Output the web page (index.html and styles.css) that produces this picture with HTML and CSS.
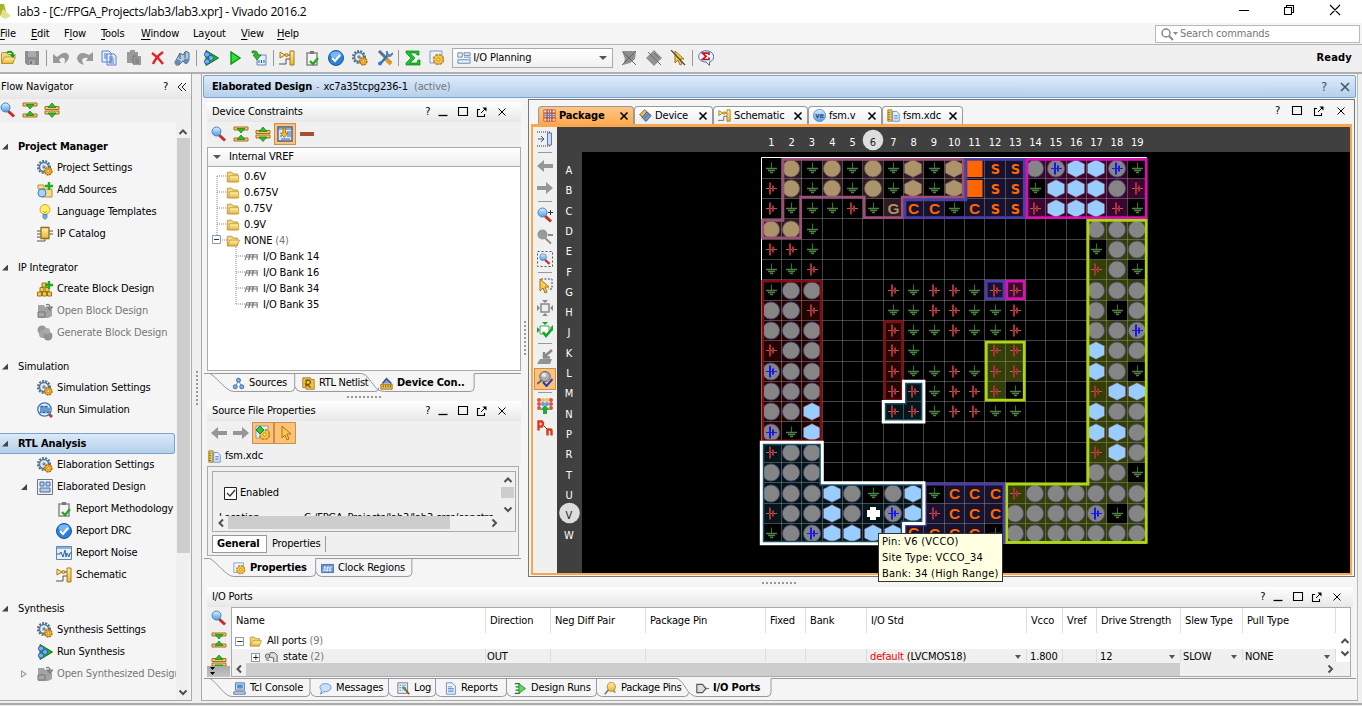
FILE: index.html
```
<!DOCTYPE html>
<html lang="en">
<head>
<meta charset="utf-8">
<title>lab3 - Vivado 2016.2</title>
<link rel="stylesheet" href="styles.css">
</head>
<body>
<svg class="defs">
<defs>
<linearGradient id="gold" x2="0" y2="1"><stop offset="0" stop-color="#fff3a8"/><stop offset="1" stop-color="#e9b53a"/></linearGradient>
<linearGradient id="sky" x2="0" y2="1"><stop offset="0" stop-color="#d9f0ff"/><stop offset="1" stop-color="#4f9be6"/></linearGradient>
</defs>
<symbol id="folder" viewBox="0 0 16 16"><path d="M1.500 3.500q0-1 1-1h4l1.500 2h5v9h-11.500z" fill="#f4d681" stroke="#b8902f"/><path d="M4 6.500h10.500v7H3z" fill="url(#gold)" stroke="#c29a37" stroke-width=".9"/></symbol>
<symbol id="fopen" viewBox="0 0 16 16"><path d="M1.500 3.500q0-1 1-1h4l1.500 2h5v9h-11.500z" fill="#f4d681" stroke="#b8902f"/><path d="M4.500 7H15.500l-3 6.500H1.500z" fill="url(#gold)" stroke="#b8902f" stroke-width=".9"/></symbol>
<symbol id="open" viewBox="0 0 16 16"><use href="#fopen"/><path d="M7 2.500q5-2 6 2" fill="none" stroke="#189a18" stroke-width="2"/><path d="M9.500 4.500h6.500l-3 3.500z" fill="#189a18"/></symbol>
<symbol id="save" viewBox="0 0 16 16"><path d="M1 1h14v14H3l-2-2z" fill="#8d8d8d"/><path d="M4 1h8v6H4zM5 10h6v5H5z" fill="#aaa"/><path d="M6 11h2v3H6z" fill="#777"/></symbol>
<symbol id="undo" viewBox="0 0 16 16"><path d="M0 4v9h8L6 10q2-3 5-2 2 2 0 6 5-4 5-8Q13-1 4 7z" fill="#999"/></symbol>
<symbol id="redo" viewBox="0 0 16 16"><path d="M16 2v9H9l2-3Q6 7 5 10q0 2 2 5Q0 13 0 8 2 1 10 4l2 1z" fill="#999"/></symbol>
<symbol id="copy" viewBox="0 0 16 16"><path d="M1 1h7l2 2v9H1zM6 4h7l2 2v9H6z" fill="#e5efff" stroke="#5b83c9"/><path d="M3 4h3M3 6h3M3 8h3M8 7h4M8 9h5M8 11h5M8 13h5" stroke="#4c78c4"/></symbol>
<symbol id="paste" viewBox="0 0 16 16"><path d="M1 2h3V0h5v2h3v4h3v9H7v-2H1z" fill="#999"/><path d="M9 9h4M9 11h4M9 13h4M7 14V6h4" stroke="#777" fill="none"/></symbol>
<symbol id="del" viewBox="0 0 16 16"><path d="M2 3q6 4 11 11M13 2Q6 7 3 14" stroke="#e0241f" stroke-width="2.4" fill="none"/></symbol>
<symbol id="bino" viewBox="0 0 16 16"><path d="M1 12 6 3l3 2 3-4 3 2v7l-3 4-3-3-4 4q-4 1-4-3z" fill="#b7c9dc" stroke="#47698b"/><circle cx="4" cy="12" r="2.6" fill="#618cb4"/><circle cx="12" cy="11" r="2.6" fill="#618cb4"/><path d="M6 4v5M11 2v6" stroke="#36587e"/></symbol>
<symbol id="synth" viewBox="0 0 16 16"><path d="M3 0.500 15.500 8 3 15.500z" fill="#28ad20" stroke="#08750e"/><g fill="#77aef0" stroke="#2460a8"><circle cx="4" cy="4.500" r="2.600"/><circle cx="8" cy="8" r="2.600"/><circle cx="4" cy="11.500" r="2.600"/></g></symbol>
<symbol id="run" viewBox="0 0 16 16"><path d="M4 2v12l9-6z" fill="#2fe038" stroke="#07940d" stroke-width="1.4"/></symbol>
<symbol id="bit" viewBox="0 0 16 16"><path d="M6 5h9v10H6z" fill="#e7f1ff" stroke="#6686b0"/><path d="M8 10v3M10.500 10v3M13 10v3" stroke="#2558ae"/><path d="M1 1q6-1 6 4h3L6 10 2 5h2Q4 2 1 3z" fill="#38b530" stroke="#14791a" stroke-width=".7"/></symbol>
<symbol id="schem" viewBox="0 0 16 16"><path d="M1 2v6l5-3zM11 1h4v14h-4z" fill="url(#gold)" stroke="#a87916"/><path d="M6 5h5M0 14h7V9h4" fill="none" stroke="#555"/><circle cx="7.500" cy="5" r="1.500" fill="#ffd466" stroke="#a87916"/></symbol>
<symbol id="meth" viewBox="0 0 16 16"><path d="M3 3h10v12H3z" fill="#f4f4f4" stroke="#888" stroke-width="1.500"/><path d="M6 1h4v3H6z" fill="#777"/><path d="M6 11l3 3 5-6" fill="none" stroke="#28a52a" stroke-width="2.4"/></symbol>
<symbol id="drc" viewBox="0 0 16 16"><circle cx="8" cy="8" r="7.500" fill="#2e7fd6" stroke="#1858a6"/><ellipse cx="8" cy="5" rx="5.500" ry="3.500" fill="#79b7f2"/><path d="M4 8l3 3 5-6" stroke="#fff" stroke-width="2" fill="none"/></symbol>
<symbol id="gear" viewBox="0 0 16 16"><circle cx="7" cy="7" r="6" fill="none" stroke="#52708c" stroke-width="2" stroke-dasharray="2 1.200"/><circle cx="7" cy="7" r="4.500" fill="#e5edf5" stroke="#56748f" stroke-width="1.500"/><circle cx="7" cy="7" r="1.700" fill="#6f8aa2"/><circle cx="11.300" cy="11.300" r="3.600" fill="#f4b52c" stroke="#b46d08" stroke-width="1.500" stroke-dasharray="2 .7"/><circle cx="11.300" cy="11.300" r="1.300" fill="#fff4c0" stroke="#a66206" stroke-width=".6"/></symbol>
<symbol id="tools" viewBox="0 0 16 16"><path d="M2 1l12 12" stroke="#58718d" stroke-width="3"/><path d="M9 9l5 5" stroke="#e29a24" stroke-width="4"/><path d="M3 14l9-10" stroke="#3471bd" stroke-width="2.500"/><path d="M10 1v4l3 1 3-3" fill="none" stroke="#5582b9" stroke-width="2"/><circle cx="3" cy="13.500" r="2" fill="#3c79c5"/></symbol>
<symbol id="sigma" viewBox="0 0 16 16"><path d="M1 1h13v4h-2l-1-2H5l5 5-5 5h7l1-3h2v5H1v-2l5-5-5-5z" fill="#19c52a" stroke="#078012" stroke-width=".7"/></symbol>
<symbol id="geardoc" viewBox="0 0 16 16"><path d="M1 1h12v12H1z" fill="#eaf2ff" stroke="#7b98c3"/><circle cx="9.500" cy="9.500" r="4.500" fill="#f3bd3a" stroke="#c8891a" stroke-width="2.500" stroke-dasharray="2.600 .9"/><circle cx="9.500" cy="9.500" r="4" fill="#f6c545"/><circle cx="9.500" cy="9.500" r="1.500" fill="#fff1b3" stroke="#a56b08" stroke-width=".7"/></symbol>
<symbol id="layout" viewBox="0 0 16 16"><path d="M1 2h5v5H1zM8 2h7v3H8zM8 7h7v2M1 10h14v4H1z" fill="#e6f0fb" stroke="#5e81a9"/></symbol>
<symbol id="grayleaf" viewBox="0 0 16 16"><path d="M1 1h14l-1 8-5 4-7 2 2-6z" fill="#8f8f8f"/><path d="M2 2l13 13M1 15 15 1" stroke="#666"/></symbol>
<symbol id="graydia" viewBox="0 0 16 16"><path d="M8 0l8 8-8 8-8-8z" fill="#929292"/><path d="M2 2l13 13M5 5l4 4M8 3l5 5" stroke="#6b6b6b"/></symbol>
<symbol id="cursor" viewBox="0 0 16 16"><path d="M5 1v12l3-3 2 5 2-1-2-5h4z" fill="#f8c94a" stroke="#a6721a"/></symbol>
<symbol id="nocur" viewBox="0 0 16 16"><use href="#cursor"/><path d="M1 0l14 15" stroke="#454545" stroke-width="1.200"/></symbol>
<symbol id="say" viewBox="0 0 16 16"><path d="M8 .8c10 0 9 10.500 3.500 11v3.700L8 12C-2 12-1.500.8 8 .8z" fill="#eef4ff" stroke="#426cb2"/><path d="M11 5V3.200H4.500L8 6.300 4.500 9.500H11V7.500" fill="none" stroke="#c4141c" stroke-width="1.700"/></symbol>
<symbol id="mag" viewBox="0 0 16 16"><path d="M8 9l6 5.500" stroke="#c92b22" stroke-width="3"/><circle cx="5.500" cy="5.500" r="4.500" fill="url(#sky)" stroke="#4b83b5"/></symbol>
<symbol id="grymag" viewBox="0 0 16 16"><path d="M8 9l6 5.500M11 6h5" stroke="#8d8d8d" stroke-width="2"/><circle cx="5.500" cy="5.500" r="5" fill="#999"/></symbol>
<symbol id="zin" viewBox="0 0 16 16"><use href="#mag"/><path d="M11 5.500h5M13.500 3v5" stroke="#333"/></symbol>
<symbol id="zfit" viewBox="0 0 16 16"><path d="M.5.5h15v15H.5z" fill="none" stroke="#555" stroke-dasharray="2 2"/><g transform="translate(2 2) scale(.75)"><use href="#mag" width="16" height="16"/></g></symbol>
<symbol id="collapse" viewBox="0 0 16 16"><path d="M1 1h14v3H1zM1 12h14v3H1z" fill="#f2ca74" stroke="#a6701b"/><path d="M4 2.500h8L8 7zM4 13.500h8L8 9z" fill="#35b827" stroke="#187b13" stroke-width=".7"/></symbol>
<symbol id="expand" viewBox="0 0 16 16"><path d="M1 4.500h14v3H1zM1 9h14v3H1z" fill="#f2ca74" stroke="#a6701b"/><path d="M4 5.500h8L8 1zM4 11h8l-4 4.500z" fill="#35b827" stroke="#187b13" stroke-width=".7"/></symbol>
<symbol id="addsrc" viewBox="0 0 16 16"><path d="M1 3h6v4H1zM5 7h10v8H5z" fill="#f5dc8b" stroke="#b69236"/><circle cx="5" cy="11" r="4" fill="#a9d2fb" stroke="#427eb9"/><path d="M12 0v8M8 4h8" stroke="#1eac25" stroke-width="2.400"/></symbol>
<symbol id="bulb" viewBox="0 0 16 16"><circle cx="8" cy="5.500" r="5" fill="#ffec6b" stroke="#d3a72b"/><path d="M6 7l2 2 2-2" fill="none" stroke="#e0a020"/><path d="M6 10.500h4v3l-2 2-2-2z" fill="#66b5ed" stroke="#3474aa" stroke-width=".7"/></symbol>
<symbol id="ip" viewBox="0 0 16 16"><path d="M0 5h4M0 8h4M0 11h4M12 5h4M12 8h4M0 15h8v-3" stroke="#555" fill="none"/><path d="M4 1.500h8v11H4z" fill="url(#gold)" stroke="#8f721b" stroke-width="1.300"/></symbol>
<symbol id="block" viewBox="0 0 16 16"><path d="M5 2h5v4H5zM3 6.500h4v4H3zM8 6.500h4v4H8zM.5 11h4v4h-4zM5.500 11h4v4h-4zM10.500 11h4v4h-4z" fill="#f0cd50" stroke="#9b7615"/><path d="M12 0v8M8 4h8" stroke="#1eac25" stroke-width="2.400"/></symbol>
<symbol id="grayblk" viewBox="0 0 16 16"><path d="M1 2h6l1 2h4l3 3v6l-4 2H1z" fill="#a3a3a3"/><path d="M1 9h7v5H1z" fill="#a8a8a8" stroke="#777"/><path d="M9 2q4-2 4 3M10.500 4h5L13 7z" stroke="#777" fill="none" stroke-width="1.200"/></symbol>
<symbol id="graygen" viewBox="0 0 16 16"><circle cx="5" cy="5" r="4.500" fill="#999"/><circle cx="6" cy="9" r="4" fill="#a5a5a5"/><circle cx="11" cy="11" r="4.500" fill="#939393"/><circle cx="10" cy="6" r="3" fill="#aaa"/></symbol>
<symbol id="sim" viewBox="0 0 16 16"><path d="M11 11l4 4" stroke="#c5401c" stroke-width="3"/><circle cx="7.500" cy="7.500" r="6.700" fill="#edf6ff" stroke="#3876b5" stroke-width="1.300"/><path d="M2.500 10.500h1.500V4.500h2v6h2v-6h2v6h2v-5" fill="none" stroke="#2a65b5" stroke-width="1.300"/></symbol>
<symbol id="elab" viewBox="0 0 16 16"><path d="M.5.5h15v15H.5z" fill="#e9eff7" stroke="#777"/><path d="M3 3h4v4H3zM9 3h4v4H9zM3 9h10v4H3z" fill="#b2ccea" stroke="#4b73a9"/></symbol>
<symbol id="noise" viewBox="0 0 16 16"><path d="M.5 1.500h15v13H.5z" fill="#e4effa" stroke="#5a87b5"/><path d="M1 3h14" stroke="#8db4da" stroke-width="2"/><path d="M1 9h3l1-2 2 5 2-7 1 7 1-4 2 4 1-4h2" fill="none" stroke="#346398"/></symbol>
<symbol id="down" viewBox="0 0 16 16"><path d="M1 1h14v14H1z" fill="#dfecff" stroke="#416494" stroke-width="1.400"/><path d="M1 3h14M10 6h4M10 8h4M4 13h9M3 10h2M10 10h4" stroke="#35659c"/><path d="M6 2h2.500v5H11l-3.700 4.500L3.500 7H6z" fill="#f5be31" stroke="#9a670f" stroke-width=".8"/></symbol>
<symbol id="minus" viewBox="0 0 16 16"><path d="M1 6h14v4H1z" fill="#a8502b"/></symbol>
<symbol id="left" viewBox="0 0 16 16"><path d="M0 8l7-6v4h9v4H7v4z" fill="#969696"/></symbol>
<symbol id="right" viewBox="0 0 16 16"><path d="M16 8 9 2v4H0v4h9v4z" fill="#969696"/></symbol>
<symbol id="prop" viewBox="0 0 16 16"><use href="#geardoc"/><path d="M5 1l4 4-4 4-4-4z" fill="#38c13b" stroke="#12812a"/></symbol>
<symbol id="xdc" viewBox="0 0 16 16"><path d="M1 1h5v14H1z" fill="#f1cf57" stroke="#987418"/><path d="M1 4h3M1 7h3M1 10h3M1 13h3" stroke="#765b17"/><path d="M7 3h5l3 3v9H7z" fill="#e7f0ff" stroke="#4e7fc3"/><path d="M9 8h4M9 10h4M9 12h4" stroke="#4e7fc3"/></symbol>
<symbol id="bank" viewBox="0 0 16 16"><path d="M.5 11.500l2-6h3v5M4.500 11.500l2-6h3v5M8.500 11.500l2-6h4v6M1 8h13" fill="none" stroke="#777" stroke-width="1.200"/></symbol>
<symbol id="src" viewBox="0 0 16 16"><path d="M8 4 4 12M8 4l4 8" stroke="#7489a8"/><g fill="#7bb0e8" stroke="#335b94"><circle cx="8" cy="4" r="2.500"/><circle cx="4" cy="12" r="2.500"/><circle cx="12" cy="12" r="2.500"/></g></symbol>
<symbol id="rtl" viewBox="0 0 16 16"><path d="M1 1h9l1 2h4v12H5v-2H1z" fill="#f0c448" stroke="#986f12"/><path d="M5 12V4h4q3 2.500 0 5H5l6 4" fill="none" stroke="#7b5a10" stroke-width="1.600"/></symbol>
<symbol id="chip" viewBox="0 0 16 16"><path d="M1 7l6-6 8 7-6 7z" fill="#7795c8" stroke="#334e7d"/><path d="M1 7l6-6 3 2.500-6 6z" fill="#e4c05a" stroke="#7b671f" stroke-width=".7"/><path d="M5 9l5-5.500M7 11l5.500-5.500M3 11l6 5" stroke="#24395f" stroke-dasharray="1 1"/></symbol>
<symbol id="devcon" viewBox="0 0 16 16"><path d="M3 8l5-6 6 6" fill="#839ecb" stroke="#40577f" stroke-width="2"/><path d="M1 9h14v6H1z" fill="#eac34b" stroke="#8b6817"/><path d="M4 10v3M7 10v3M10 10v3M13 10v3" stroke="#6d5011"/></symbol>
<symbol id="clock" viewBox="0 0 16 16"><path d="M.5 3h15v10H.5z" fill="#6894d5" stroke="#3866aa"/><path d="M2 11h2V6h2v5h2V6h2v5h2V6h2" fill="none" stroke="#fff"/></symbol>
<symbol id="pkg" viewBox="0 0 16 16"><path d="M1 1h14v14H1z" fill="#fff0b8" stroke="#b64a32"/><path d="M1 5h14M1 11h14M5 1v14M11 1v14" stroke="#c9372b" stroke-width="1.600"/><path d="M1 8h14M8 1v14" stroke="#5c86ca" stroke-width="1.600"/></symbol>
<symbol id="ve" viewBox="0 0 16 16"><circle cx="8" cy="8" r="7.500" fill="url(#sky)" stroke="#4e86b9"/><text x="8" y="11.200" font-size="9" font-weight="bold" text-anchor="middle" fill="#1d4b83">ve</text></symbol>
<symbol id="dock" viewBox="0 0 16 16"><path d="M10.500 2h4v12h-4z" fill="#c9dcf5" stroke="#5b7bab"/><path d="M0 1h14M0 15h14" stroke="#333" stroke-dasharray="1 1"/><path d="M1 8h6M4 5l3 3-3 3" stroke="#37588b" fill="none"/></symbol>
<symbol id="selarea" viewBox="0 0 16 16"><path d="M4 1h11v10h-4" fill="none" stroke="#444" stroke-dasharray="2 1.500"/><use href="#cursor" x="-2"/></symbol>
<symbol id="resize" viewBox="0 0 16 16"><path d="M4 4h8v8H4z" fill="#eee" stroke="#888" stroke-width="1.500"/><path d="M5 0h6L8 3zM5 16h6l-3-3zM0 5v6l3-3zM16 5v6l-3-3z" fill="#888"/></symbol>
<symbol id="greenfit" viewBox="0 0 16 16"><path d="M3 4h9v8H3z" fill="#fff" stroke="#49a94e"/><path d="M5 0h6L8 3zM0 5v6l3-3zM16 3v6l-3-3z" fill="#19a52b"/><path d="M6 10l3 4 6-7" stroke="#19a52b" stroke-width="2.500" fill="none"/></symbol>
<symbol id="graychip" viewBox="0 0 16 16"><path d="M0 15l3-5h12l-2 5z" fill="#929292"/><path d="M15 1 7 8M7 3v5.500h6" stroke="#888" stroke-width="2.500" fill="none"/></symbol>
<symbol id="ball" viewBox="0 0 16 16"><path d="M6 11l3.500 4L15.500 8" stroke="#213cb8" stroke-width="2" fill="none"/><path d="M0 13l5-4" stroke="#666" stroke-width="2"/><ellipse cx="8" cy="5.500" rx="5.300" ry="5" fill="#a9adb5" stroke="#626773"/><ellipse cx="7" cy="4" rx="2.500" ry="2" fill="#e5e8ec"/></symbol>
<symbol id="matrix" viewBox="0 0 16 16"><g fill="#df5140"><circle cx="2" cy="2" r="2"/><circle cx="14" cy="2" r="2"/><circle cx="2" cy="6" r="2"/><circle cx="14" cy="6" r="2"/><circle cx="2" cy="10" r="2"/><circle cx="14" cy="10" r="2"/></g><g fill="#edc058"><circle cx="6" cy="2" r="2"/><circle cx="10" cy="2" r="2"/></g><g fill="#6097e0"><circle cx="6" cy="6" r="2"/><circle cx="10" cy="6" r="2"/></g><path d="M8 7l5 5h-3v4H6v-4H3z" fill="#27a938"/></symbol>
<symbol id="pn" viewBox="0 0 16 16"><path d="M1.500 10.500V1.500h3.500q2 2.500 0 5H1.500M10.500 15.500V9.500h3q1 0 1 2v4" stroke="#dc3818" stroke-width="2.400" fill="none"/><path d="M7 6l3 3" stroke="#444"/></symbol>
<symbol id="console" viewBox="0 0 16 16"><path d="M3 1h11v9H3zM1 12h14v3H1z" fill="#c7dcf3" stroke="#47658b"/><path d="M5 3h7v5H5z" fill="#4d91d8"/></symbol>
<symbol id="msg" viewBox="0 0 16 16"><path d="M8 2c9 0 9 9 0 10H6l-4 3 1-5C-1 6 2 2 8 2z" fill="#c7e0fb" stroke="#5686bd"/></symbol>
<symbol id="log" viewBox="0 0 16 16"><path d="M1 1h12v13H1z" fill="#e7eef7" stroke="#56708e"/><path d="M3 4h8M3 7h8M3 10h4" stroke="#53759c" stroke-dasharray="2 1"/><path d="M9 8l6 7" stroke="#a3372a" stroke-width="2"/><path d="M7 6l4 4" stroke="#3ea245" stroke-width="3"/></symbol>
<symbol id="doc" viewBox="0 0 16 16"><path d="M3 1h7l4 4v10H3z" fill="#f0f6ff" stroke="#4e7fc3"/><path d="M5 6h5M5 8h7M5 10h7M5 12h7" stroke="#4e7fc3"/></symbol>
<symbol id="druns" viewBox="0 0 16 16"><path d="M6 2v12l8-6z" fill="#5fdb58" stroke="#128219"/><path d="M1 2h6M2 6h4M2 10h4M1 14h6" stroke="#23762a" stroke-width="1.300"/></symbol>
<symbol id="pin" viewBox="0 0 16 16"><path d="M1 15l5-6" stroke="#777" stroke-width="2"/><ellipse cx="9" cy="6" rx="5" ry="5.500" fill="url(#gold)" stroke="#ad7820"/><path d="M11 10l3 3" stroke="#ba8b2b" stroke-width="2"/></symbol>
<symbol id="port" viewBox="0 0 16 16"><path d="M1 3h7l4 5-4 5H1z" fill="#ddd" stroke="#555" stroke-width="1.400"/><path d="M12 8h4M12 6v4" stroke="#555"/></symbol>
<symbol id="bus" viewBox="0 0 16 16"><path d="M7 3h5l3 3v8h-4V9L6 8z" fill="#ddd" stroke="#555"/><circle cx="4" cy="7" r="2.500" fill="#ccc" stroke="#555"/><path d="M2 11l4 1" stroke="#555"/></symbol>
<symbol id="float" viewBox="0 0 12 12"><path d="M4 3.500H1.500v7h7V8" fill="none" stroke="#000" stroke-width="1.100"/><path d="M5 7l4-4" stroke="#000"/><path d="M6.500 1.500h4v4z"/></symbol>
<symbol id="max" viewBox="0 0 12 12"><path d="M1.500 1.500h9v8h-9z" fill="none" stroke="#000" stroke-width="1.100"/></symbol>
<symbol id="min" viewBox="0 0 12 12"><path d="M1.500 9.500h9" stroke="#000" stroke-width="1.300"/></symbol>
<symbol id="x" viewBox="0 0 12 12"><path d="M2.500 2.500l7 7M9.500 2.500l-7 7" stroke="#000" stroke-width="1"/></symbol>
<symbol id="bx" viewBox="0 0 12 12"><path d="M2.500 2.500l7 7M9.500 2.500l-7 7" stroke="#000" stroke-width="1.600"/></symbol>
<symbol id="gx" viewBox="0 0 12 12"><path d="M2 2l8 8M10 2l-8 8" stroke="#456" stroke-width="1.600"/></symbol>
<symbol id="up" viewBox="0 0 12 12"><path d="M2.500 8 6 4.500 9.500 8" fill="none" stroke="#505050" stroke-width="2"/></symbol>
<symbol id="dn" viewBox="0 0 12 12"><path d="M2.500 4.500 6 8l3.500-3.500" fill="none" stroke="#505050" stroke-width="2"/></symbol>
<symbol id="lt" viewBox="0 0 12 12"><path d="M8 2.500 4.500 6 8 9.500" fill="none" stroke="#505050" stroke-width="2"/></symbol>
<symbol id="rt" viewBox="0 0 12 12"><path d="M4.500 2.500 8 6 4.500 9.500" fill="none" stroke="#505050" stroke-width="2"/></symbol>
</svg>

<header class="title"><svg class="logo" viewBox="0 0 12 16"><path d="M0 0h4l2 8-6 4z" fill="#a9b52d"/><path d="M3 5l8 7-6 3-5-3z" fill="#e3e28c"/></svg><span>lab3 - [C:/FPGA_Projects/lab3/lab3.xpr] - Vivado 2016.2</span>
<svg class="winbtns" viewBox="0 0 120 20"><path d="M2 10.500h10M47.500 7.500h7v7h-7zM49.500 7.500v-2h7v7h-2M93 5l10 10M103 5 93 15" fill="none" stroke="#000" stroke-width="1.100"/></svg></header>
<nav class="menu"><span><u>F</u>ile</span><span><u>E</u>dit</span><span>F<u>l</u>ow</span><span><u>T</u>ools</span><span><u>W</u>indow</span><span>La<u>y</u>out</span><span><u>V</u>iew</span><span><u>H</u>elp</span><div class="search"><svg viewBox="0 0 18 14"><circle cx="6" cy="6" r="4" fill="none" stroke="#888" stroke-width="1.500"/><path d="M9 9l4 4" stroke="#888" stroke-width="2"/><path d="M13 5h5l-2.500 3z" fill="#888"/></svg>Search commands</div></nav>
<div class="toolbar" id="toolbar"></div>

<main>
<aside class="nav">
  <div class="ph navh"><span>Flow Navigator</span><b class="q">?</b><svg class="dbl" viewBox="0 0 10 10"><path d="M5 1 1 5l4 4M9 1 5 5l4 4" fill="none" stroke="#222"/></svg></div>
  <div class="ntools"><svg><use href="#mag"/></svg><svg><use href="#collapse"/></svg><svg><use href="#expand"/></svg></div>
  <div class="nbody"><div class="tree" id="flow"></div>
  <div class="vs"><svg><use href="#up"/></svg><i></i><svg><use href="#dn"/></svg></div></div>
</aside>
<div class="grip"><i></i></div>
<section class="work">
  <div class="dh"><b>Elaborated Design</b><em>-</em>xc7a35tcpg236-1 <span class="mut">(active)</span><span class="dq">?</span><svg><use href="#gx"/></svg></div>
  <div class="split">
    <div class="leftcol">
      <div class="ph"><span>Device Constraints</span><div class="wb"><b>?</b><svg><use href="#min"/></svg><svg><use href="#max"/></svg><svg><use href="#float"/></svg><svg><use href="#x"/></svg></div></div>
      <div class="pt"><svg><use href="#mag"/></svg><svg><use href="#collapse"/></svg><svg><use href="#expand"/></svg><span class="on"><svg><use href="#down"/></svg></span><svg><use href="#minus"/></svg></div>
      <div class="th"><i></i>Internal VREF</div>
      <div class="dtree"><svg class="lines" viewBox="0 0 60 160"><path d="M9 9h10M9 25h10M9 41h10M9 57h10M9 9v60M14 73h6M28 80v57M28 89h10M28 105h10M28 121h10M28 137h10" fill="none" stroke="#888" stroke-dasharray="1 1"/><path d="M4.500 68.500h8v8h-8z" fill="#fff" stroke="#8b9bab"/><path d="M6 72.500h5" stroke="#235"/></svg>
        <div><svg><use href="#folder"/></svg>0.6V</div><div><svg><use href="#folder"/></svg>0.675V</div><div><svg><use href="#folder"/></svg>0.75V</div><div><svg><use href="#folder"/></svg>0.9V</div><div><svg><use href="#fopen"/></svg>NONE&nbsp;<span class="mut">(4)</span></div>
        <div class="sub"><svg><use href="#bank"/></svg>I/O Bank 14</div><div class="sub"><svg><use href="#bank"/></svg>I/O Bank 16</div><div class="sub"><svg><use href="#bank"/></svg>I/O Bank 34</div><div class="sub"><svg><use href="#bank"/></svg>I/O Bank 35</div></div>
      <div class="bt bt1"><svg class="shape" viewBox="0 0 318 20"><path d="M6 .5C14 5 22 18.500 30 18.500h57q4 0 4-4V.5M91.500 14q1 4 5 4.500h75q4 0 4-4M158 .5q4 0 8 6l7 9q3 3 8 3h86q4 0 4-4V.5M0 .5h158M271 .5h47" fill="none" stroke="#999"/></svg><span><svg><use href="#src"/></svg>Sources</span><span><svg><use href="#rtl"/></svg>RTL Netlist</span><b><svg><use href="#devcon"/></svg>Device Con..</b></div>
      <div class="hgrip"><i></i></div>
      <div class="ph"><span>Source File Properties</span><div class="wb"><b>?</b><svg><use href="#min"/></svg><svg><use href="#max"/></svg><svg><use href="#float"/></svg><svg><use href="#x"/></svg></div></div>
      <div class="pt pt2"><svg><use href="#left"/></svg><svg><use href="#right"/></svg><span class="on"><svg><use href="#prop"/></svg></span><span class="on"><svg><use href="#cursor"/></svg></span></div>
      <div class="file"><svg><use href="#xdc"/></svg>fsm.xdc</div>
      <div class="pbox"><div class="pin"><div class="pmain"><div class="pc"><div class="chk"><svg viewBox="0 0 13 13"><path d="M.5.5h12v12H.5z" fill="#fff" stroke="#222"/><path d="M3 6l3 3 5-6" fill="none" stroke="#333" stroke-width="1.300"/></svg>Enabled</div><div class="loc"><span>Location:</span><span>C:/FPGA_Projects/lab3/lab3.srcs/constrs</span></div></div><div class="pv"><svg><use href="#up"/></svg><i></i><svg><use href="#dn"/></svg></div></div><div class="phs"><svg><use href="#lt"/></svg><i></i><svg><use href="#rt"/></svg></div></div><div class="pt3"><b>General</b><span>Properties</span></div></div>
      <div class="bt bt2"><svg class="shape" viewBox="0 0 318 20"><path d="M0 .5h6C14 5 22 18.500 30 18.500h78q4 0 4-4V.5H318M112.500 14q1 4 5 4.500h87q4 0 4-4V.5" fill="none" stroke="#999"/></svg><b><svg><use href="#geardoc"/></svg>Properties</b><span><svg><use href="#clock"/></svg>Clock Regions</span></div>
    </div>
    <div class="vgrip"><i></i></div>
    <div class="pkg">
      <div class="ptabs"><span class="act"><svg><use href="#pkg"/></svg>Package<svg class="c"><use href="#bx"/></svg></span><span><svg><use href="#chip"/></svg>Device<svg class="c"><use href="#bx"/></svg></span><span><svg><use href="#schem"/></svg>Schematic<svg class="c"><use href="#bx"/></svg></span><span><svg><use href="#ve"/></svg>fsm.v<svg class="c"><use href="#bx"/></svg></span><span><svg><use href="#xdc"/></svg>fsm.xdc<svg class="c"><use href="#bx"/></svg></span><div class="wb"><b>?</b><svg><use href="#max"/></svg><svg><use href="#float"/></svg><svg><use href="#x"/></svg></div></div>
      <div class="view"><div class="vtools" id="vtools"></div><svg id="map" viewBox="557 127 795 446"></svg></div>
    </div>
  </div>
  <div class="hgrip low"><i></i></div>
  <div class="ports">
    <div class="ph"><span>I/O Ports</span><div class="wb"><b>?</b><svg><use href="#min"/></svg><svg><use href="#max"/></svg><svg><use href="#float"/></svg><svg><use href="#x"/></svg></div></div>
    <div class="prow"><div class="ptl"><svg><use href="#mag"/></svg><svg><use href="#collapse"/></svg><svg><use href="#expand"/></svg><div class="more"><svg viewBox="0 0 8 12"><path d="M1 1h5L3.500 4zM1 6h5L3.500 9z"/></svg></div></div>
    <div class="tbl"><div class="tmain"><div><div class="r h"><span>Name</span><span>Direction</span><span>Neg Diff Pair</span><span>Package Pin</span><span>Fixed</span><span>Bank</span><span>I/O Std</span><span>Vcco</span><span>Vref</span><span>Drive Strength</span><span>Slew Type</span><span>Pull Type</span></div>
      <div class="all"><i class="pm">−</i><svg><use href="#fopen"/></svg>All ports&nbsp;<span class="mut">(9)</span></div>
      <div class="r st"><span class="nm"><i class="pm">+</i><svg><use href="#bus"/></svg>state&nbsp;<span class="mut">(2)</span></span><span>OUT</span><span></span><span></span><span></span><span></span><span class="dd"><em>default</em>&nbsp;(LVCMOS18)<i></i></span><span>1.800</span><span></span><span class="dd">12<i></i></span><span class="dd">SLOW<i></i></span><span class="dd">NONE<i></i></span></div></div><div class="tv"><svg><use href="#up"/></svg><svg><use href="#dn"/></svg></div></div>
      <div class="ths"><svg><use href="#lt"/></svg><i></i><svg><use href="#rt"/></svg></div></div></div>
    <div class="bt bt3"><svg class="shape" viewBox="0 0 1152 20" preserveAspectRatio="xMinYMin slice"><path d="M0 .5h473M6 .5C14 5 20 18.500 28 18.500h74q4 0 4-4V.5M106.500 14q1 4 5 4.500h69q4 0 4-4V.5M184.500 14q1 4 5 4.500h38q4 0 4-4V.5M231.500 14q1 4 5 4.500h62q4 0 4-4V.5M302.500 14q1 4 5 4.500h81q4 0 4-4V.5M392.500 14q1 4 5 4.500h83q4 0 4-4M473 .5c8 3 10 18 20 18h70q4 0 4-4V.5H1152" fill="none" stroke="#999"/></svg><span><svg><use href="#console"/></svg>Tcl Console</span><span><svg><use href="#msg"/></svg>Messages</span><span><svg><use href="#log"/></svg>Log</span><span><svg><use href="#doc"/></svg>Reports</span><span><svg><use href="#druns"/></svg>Design Runs</span><span><svg><use href="#pin"/></svg>Package Pins</span><b><svg><use href="#port"/></svg>I/O Ports</b></div>
  </div>
</section>
</main>
<div class="foot"></div>
<div class="tip">Pin: V6 (VCCO)<br>Site Type: VCCO_34<br>Bank: 34 (High Range)</div>
<script src="app.js"></script>
</body>
</html>
```
FILE: styles.css
```
*{box-sizing:border-box}
body{margin:0;width:1362px;height:706px;overflow:hidden;background:#f0f0f0;color:#000;font:11px/16px "DejaVu Sans Condensed","DejaVu Sans",sans-serif;font-stretch:condensed;letter-spacing:-.15px;display:flex;flex-direction:column;position:relative;white-space:nowrap}
b{letter-spacing:-.15px}
svg{width:16px;height:16px;flex:none;display:block}
.defs{position:absolute;width:0;height:0}
.mut{color:#777}
.title{height:23px;background:#fff;display:flex;align-items:center;font:12px "Open Sans",sans-serif;letter-spacing:-.25px;flex:none}
.title .logo{width:12px;height:16px;margin-right:5px}
.winbtns{width:120px;height:20px;margin-left:auto;margin-right:5px;margin-top:-3px}
.menu{height:21px;background:#f5f5f5;display:grid;grid-template-columns:31px 33px 37px 40px 52px 48px 36px 1fr auto;align-items:center;flex:none}
.menu u{text-underline-offset:2px}
.search{width:205px;height:18px;border:1px solid #b8b8b8;background:#fff;color:#777;display:flex;align-items:center;margin-right:2px;padding-left:4px}
.search svg{width:18px;height:14px;margin-right:2px}
.toolbar{height:30px;border-top:1px solid #b4b4b4;border-bottom:2px solid #b0b0b0;display:flex;align-items:center;padding-bottom:2px;flex:none}
.toolbar .cell{width:24.3px;display:flex;justify-content:center}
.toolbar .cell:first-child{margin-left:-4px}
.toolbar .sep{width:1px;height:16px;background:#999;margin:0 1.500px}
.combo{width:161px;height:20px;border:1px solid #aaa;background:linear-gradient(#fff,#f0f0f0);display:flex;align-items:center;margin:0 4px 0 3px;padding:0 5px 0 4px}
.combo svg{width:14px;height:14px;margin-right:2px}
.combo i,.dd i,.th i{border:4px solid transparent;border-top-color:#555;border-bottom:0;margin-left:auto}
.ready{margin-left:auto;margin-right:10px;letter-spacing:.2px}
main{height:629px;display:flex;flex:none}
.nav{width:192px;border-right:1px solid #aaa;border-bottom:1px solid #aaa;display:flex;flex-direction:column;margin-bottom:2px}
.ph{height:20px;background:linear-gradient(#fff,#e7e7e7);display:flex;align-items:center;padding-left:5px}
.navh{height:25px;padding-left:1px}
.q{margin-left:auto;margin-right:9px;font-weight:normal}
.dbl{width:10px;height:10px;margin-right:4px}
.ntools{height:24px;display:flex;gap:6px;align-items:center;padding-bottom:3px}
.nbody{flex:1;background:#f5f5f5;display:flex;min-height:0}
.tree{width:176px;padding-top:13px;overflow:hidden}
.tree .g{height:21px;display:flex;align-items:center;padding-left:2px;margin-top:12px}
.tree .g:first-child{margin-top:0}
.tree .g.sel{width:175px;border:1px solid #7aa3d0;border-left:0;border-radius:0 3px 3px 0;background:linear-gradient(#dce9f8,#b4cfea)}
.arr{width:6px;height:6px;background:#444;clip-path:polygon(100% 0,100% 100%,0 100%);margin-right:10px;flex:none}
.tree .l{height:22px;display:flex;align-items:center;padding-left:37px}
.tree .l svg{margin-right:4px}
.tree .l.exp{padding-left:21px}
.tree .l.deep{padding-left:56px}
.tree .l.off{color:#777}
.arr.hollow{width:6px;height:8px;background:#999;clip-path:polygon(0 0,100% 50%,0 100%,0 0,1px 2px,1px 6px,4px 4px,1px 2px)}
.vs{width:14px;display:flex;flex-direction:column;align-items:center;padding:3px 0 2px;background:#f0f0f0}
.vs svg,.tv svg,.pv svg,.ths svg,.phs svg{width:12px;height:12px}
.vs i{width:13px;height:415px;background:#cdcdcd;margin-bottom:auto}
.grip{width:9px;display:flex;align-items:center;justify-content:center}
.grip i,.vgrip i{width:2px;height:35px;background:repeating-linear-gradient(#999 0 2px,transparent 2px 4px)}
.work{flex:1;border-left:1px solid #aaa;border-right:1px solid #bbb;border-bottom:1px solid #aaa;margin:0 4px 2px 0;background:#f5f5f5;padding:1px 1px 0;display:flex;flex-direction:column}
.dh{height:23px;border:1px solid #7aa3d0;border-radius:2px;background:linear-gradient(#deeafa,#b5d0eb);display:flex;align-items:center;padding-left:8px;flex:none}
.dh em{font-style:normal;color:#777;margin:0 4px}
.dh .mut{margin-left:6px}
.dh .dq{margin-left:auto;margin-right:12px;font-size:13px;color:#357}
.dh svg{width:12px;height:12px;margin-right:4px}
.split{height:480px;display:flex;flex:none}
.leftcol{width:318px;padding-top:4px;padding-left:4px;display:flex;flex-direction:column}
.wb{margin-left:auto;display:flex;align-items:center;gap:7.700px;padding-right:12px}
.wb b{font-weight:normal;margin-right:-1px}
.wb svg{width:12px;height:12px}
.pt{height:25px;display:flex;align-items:center;gap:6px;padding-left:4px;padding-bottom:1px;background:#f0f0f0;flex:none}
.on{width:22px;height:22px;border:1px solid #c59050;background:#ffc176;display:flex;align-items:center;justify-content:center;margin:0 -3px}
.th{height:20px;border:1px solid #aaa;background:linear-gradient(#fff,#eee);display:flex;align-items:center;flex:none}
.th i{margin:0 8px 0 5px}
.dtree{height:204px;background:#fff;border:1px solid #aaa;border-top:0;position:relative;padding-top:2px;flex:none}
.dtree .lines{position:absolute;left:0;top:0;width:60px;height:160px}
.dtree div{height:16px;display:flex;align-items:center;padding-left:18px}
.dtree div.sub{padding-left:36px}
.dtree div svg{width:14px;height:14px;margin-right:4px}
.dtree div.sub svg{width:15px}
.bt{display:grid;height:20px;position:relative;margin-left:-3px;flex:none;align-items:center}
.bt .shape{position:absolute;left:0;top:0;width:100%;height:20px}
.bt span,.bt b{display:flex;align-items:center;position:relative}
.bt span svg,.bt b svg{width:13px;height:13px;margin-right:4px}
.bt1{grid-template-columns:70px 78px 1fr;padding-left:28px;margin-top:2px}
.bt1 span:nth-of-type(2){letter-spacing:-.3px}
.bt2{grid-template-columns:88px 1fr;padding-left:29px;margin-top:2px}
.hgrip{height:8px;display:flex;align-items:center;justify-content:center;flex:none}
.hgrip i{width:35px;height:2px;background:repeating-linear-gradient(90deg,#999 0 2px,transparent 2px 4px)}
.leftcol>.ph{flex:none}
.leftcol .wb{padding-right:13px}
.file{height:20px;display:flex;align-items:center;padding-left:1px;background:#f0f0f0;flex:none}
.file svg{width:13px;height:13px;margin-right:4px}
.pbox{height:90px;width:312px;border:1px solid #aaa;background:#f0f0f0;padding:4px;flex:none}
.pin{height:61px;width:304px;border:1px solid #aaa}
.pmain{height:44px;display:flex}
.pc{width:288px;overflow:hidden;padding-top:14px}
.chk{display:flex;align-items:center;padding-left:11px;gap:3px;height:14px}
.loc{display:flex;padding-left:6px;margin-top:10px;overflow:hidden}
.loc span:first-child{width:85px}
.chk svg{width:13px;height:13px}
.pv{width:13px;display:flex;flex-direction:column;align-items:center;padding-top:2px}
.pv i{width:13px;height:11px;margin:1px 0 5px;background:#cdcdcd}
.phs,.ths{display:flex;align-items:center;height:14px}
.phs{padding:0 15px 0 2px;height:13px}
.phs i{width:222px;height:13px;background:#cdcdcd;margin:0 auto 0 1px}
.pt3{display:flex;align-items:center;height:18px;margin-top:3px}
.pt3 b{border:1px solid #999;background:#fff;height:18px;padding:0 4px;width:55px;line-height:16px}
.pt3 span{padding:0 5px;border-right:1px solid #999}
.vgrip{width:7px;display:flex;padding-top:223px;height:280px;justify-content:center}
.pkg{width:827px;border:1px solid #777;background:#f5f5f5;margin-top:1px;height:478px;padding:6px 2px 2px}
.ptabs{display:grid;grid-template-columns:96px 79px 95px 74px 81px 1fr;padding-left:7px;height:18px}
.ptabs>span{border:1px solid #999;border-bottom:0;border-radius:4px 4px 0 0;background:linear-gradient(#fff,#eee);display:flex;align-items:center;padding:0 3px 0 4px}
.ptabs span svg{width:13px;height:13px;margin-right:3px}
.ptabs span svg.c{width:12px;height:12px;margin:0 0 0 auto}
.ptabs .act{font-weight:bold;background:linear-gradient(#ffc585,#ffab50)}
.ptabs .wb{margin-top:-8px;padding-right:5px;gap:10px}
.ptabs .wb b{margin-right:1px}
.view{display:flex;border:2px solid #fba64c;border-top-width:3px;height:451px;background:#f0f0f0;overflow:hidden}
.vtools{width:24px;flex:none;display:flex;flex-direction:column;align-items:center;padding-top:1px}
.vtools .k{height:22px;display:flex;align-items:center;flex:none}
.vtools hr{width:14px;border:0;border-top:1px solid #999;margin:2px 0;flex:none}
.vtools .on{margin:0;flex:none}
#map{width:795px;height:446px;flex:none}
#map text{font-family:"DejaVu Sans Condensed",sans-serif;letter-spacing:0}
#map .c{font-family:"Liberation Sans",sans-serif}
#map .s{font-family:"DejaVu Sans",sans-serif}
.low{height:9px}
.ports{flex:1;padding-left:4px;padding-right:3px}
.ports .wb{padding-right:10px}
.prow{display:flex;height:70px}
.ptl{width:24px;overflow:hidden;display:flex;flex-direction:column;align-items:center;padding-top:3px;gap:6px;position:relative;background:#f0f0f0}
.more{position:absolute;left:0;bottom:0;height:11px;width:23px;background:linear-gradient(#aaa,#c4c4c4)}
.more svg{width:8px;height:12px;margin-left:2px}
.tbl{width:1120px;border:1px solid #aaa;background:#fff}
.tmain{display:flex;height:54px;overflow:hidden}
.r{display:grid;grid-template-columns:254px 65px 95px 120px 40px 61px 160px 36px 34px 84px 62px 93px;height:25px}
.r span{border-right:1px solid #ddd;display:flex;align-items:center;padding-left:4px}
.r.st{height:16px;background:#f0f0f0}
.r.st>span{padding-left:1px}
.r.st>span.dd,.r.st>span:nth-child(8){padding-left:3px}
.r.st>span:nth-child(11),.r.st>span:nth-child(12){padding-left:2px}
.r.st .mut,.all .mut{border:0;padding:0}
.r.st>.nm{padding-left:19px}
.nm svg{width:14px;height:14px;margin:0 5px 0 4px}
.dd i{margin-right:5px;border-width:4px 3px 0}
.dd em{color:#e00;font-style:normal}
.all{height:16px;display:flex;align-items:center;padding-left:3px}
.all svg{width:13px;height:13px;margin:0 5px 0 5px}
.pm{width:9px;height:9px;border:1px solid #8b9bab;font:9px/7px "DejaVu Sans",sans-serif;background:#fff;text-align:center;flex:none}
.tv{margin-left:3px;padding-top:27px;display:flex;flex-direction:column}
.ths i{width:934px;height:13px;background:#cdcdcd;margin:0 auto 0 1px}
.ths{background:#f0f0f0;padding:0 14px 0 1px}
.bt3{grid-template-columns:86px 78px 47px 70px 90px 92px 1fr;padding-left:29px;margin-top:1px;margin-right:-3px;overflow:hidden}
.bt3 span:nth-of-type(6){letter-spacing:-.3px}
.bt3 .shape{width:1152px}
.foot{height:3px;border-top:2px solid #aaa}
.tip{position:absolute;left:878px;top:533px;width:125px;height:49px;border:1px solid #333;background:#ffffe1;padding:0 3px;line-height:16px;letter-spacing:.22px}
```
FILE: app.js
```
const svg = id => `<svg><use href="#${id}"/></svg>`;
const cell = id => `<span class="cell">${svg(id)}</span>`;

// Main toolbar
document.getElementById('toolbar').innerHTML =
  'open save | undo redo copy paste del bino | synth run bit | schem meth drc gear tools | sigma geardoc + grayleaf graydia nocur | say'
    .split(' ').map(t => t === '|' ? '<i class="sep"></i>' : t === '+' ? `<div class="combo">${svg('layout')}I/O Planning<i></i></div>` : cell(t)).join('') +
  '<b class="ready">Ready</b>';

// Flow navigator: [class, icon, label]
const flow = [
  ['g b', '', 'Project Manager'], ['l', 'gear', 'Project Settings'], ['l', 'addsrc', 'Add Sources'], ['l', 'bulb', 'Language Templates'], ['l', 'ip', 'IP Catalog'],
  ['g', '', 'IP Integrator'], ['l', 'block', 'Create Block Design'], ['l off', 'grayblk', 'Open Block Design'], ['l off', 'graygen', 'Generate Block Design'],
  ['g', '', 'Simulation'], ['l', 'gear', 'Simulation Settings'], ['l', 'sim', 'Run Simulation'],
  ['g b sel', '', 'RTL Analysis'], ['l', 'gear', 'Elaboration Settings'], ['l exp', 'elab', 'Elaborated Design'],
  ['l deep', 'meth', 'Report Methodology'], ['l deep', 'drc', 'Report DRC'], ['l deep', 'noise', 'Report Noise'], ['l deep', 'schem', 'Schematic'],
  ['g', '', 'Synthesis'], ['l', 'gear', 'Synthesis Settings'], ['l', 'synth', 'Run Synthesis'], ['l off exp closed', 'grayblk', 'Open Synthesized Design']
];
document.getElementById('flow').innerHTML = flow.map(([c, icon, t]) => {
  const arrow = c[0] === 'g' || c.includes('exp') ? `<i class="arr${c.includes('closed') ? ' hollow' : ''}"></i>` : '';
  const label = c.includes(' b') ? `<b>${t}</b>` : `<span>${t}</span>`;
  return `<div class="${c}">${arrow}${icon ? svg(icon) : ''}${label}</div>`;
}).join('');

document.getElementById('vtools').innerHTML =
  'dock - left right - zin grymag zfit - selarea resize greenfit - graychip *ball - matrix pn'.split(' ')
    .map(t => t === '-' ? '<hr>' : t[0] === '*' ? `<div class="on">${svg(t.slice(1))}</div>` : `<div class="k">${svg(t)}</div>`).join('');

// Package pin map
const rows = 'ABCDEFGHJKLMNPRTUVW';
const pins = [
  'gtgtgtgxgxQSSobhhbg', 'rtgtgtgxgxQSSghhhor', 'rgggrgGCCgCSSrhhhrg', 'ttg.............ooo',
  'rrg.............goo', 'ggr.............rog', 'goo...rgrrgrr...ooo', 'oor...ggrrggr...ogo',
  'ooo...rggrggr...oob', 'roo...rg...rr...hoo', 'boo...rggrgrr...hog', 'ooo...rrgrrrg...rhh',
  'ooh...rrgrrgg...hoo', 'bgh.............hho', 'roo.............rho', 'ooo.............oog',
  'ooohogohgCCCroooooo', 'roohowbhrCCCoooobgo', 'gobhhhh.CCCgooooooo'
];
const X = k => 761.3 + 20.33 * k, Y = k => 158 + 20.3 * k;
const banks = [
  ['#9c5078', '#2f1a24', [[1,0],[10,0],[10,2],[7,2],[7,3],[5,3],[5,2],[2,2],[2,4],[0,4],[0,3],[1,3]]],
  ['#4d3ca8', '#17122e', [[10,0],[13,0],[13,3],[7,3],[7,2],[10,2]]],
  ['#d911b0', '#3a0530', [[13,0],[19,0],[19,3],[13,3]]],
  ['#acd60d', '#343f07', [[16,3],[19,3],[19,19],[12,19],[12,16],[16,16]]],
  ['#acd60d', '#343f07', [[11,9],[13,9],[13,12],[11,12]]],
  ['#7f0e12', '#240303', [[0,6],[3,6],[3,14],[0,14]]],
  ['#7f0e12', '#240303', [[6,8],[7,8],[7,12],[6,12]]],
  ['#4d3ca8', '#17122e', [[8,16],[12,16],[12,19],[7,19],[7,18],[8,18]]],
  ['#4d3ca8', '#17122e', [[11,6],[12,6],[12,7],[11,7]]],
  ['#d911b0', '#3a0530', [[12,6],[13,6],[13,7],[12,7]]],
  ['#155064', '#04161c', [[7,11],[8,11],[8,13],[6,13],[6,12],[7,12]], 1],
  ['#155064', '#04161c', [[0,14],[3,14],[3,16],[8,16],[8,18],[7,18],[7,19],[0,19]], 1]
];
const path = p => 'M' + p.map(([a, b]) => X(a).toFixed(1) + ' ' + Y(b).toFixed(1)).join('L') + 'Z';
let s = '<path fill="#404040" d="M557 127h795v446H557z"/><path d="M582 152h770v421H582z"/>';
s += banks.map(b => `<path d="${path(b[2])}" fill="${b[1]}"/>`).join('');
pins.forEach((row, r) => [...row].forEach((c, k) => {
  if (c === 'g') s += `<path d="M${X(k)} ${Y(r)}h20.3v20.3h-20.3z"/>`;
}));
for (let k = 1; k < 19; k++)
  s += `<path d="M${Math.floor(X(k)) + .5} 158V543M761 ${Math.floor(Y(k)) + .5}H1147" stroke="#a8a8a8" stroke-opacity=".4"/>`;
pins.forEach((row, r) => [...row].forEach((c, k) => {
  const x = Math.round(X(k) + 9.7), y = Math.round(Y(r) + 9.7) + .5;
  const at = `transform="translate(${x} ${y})"`;
  const power = (col, bar) => `<g ${at}><path d="M-5 0H6" stroke="${col}"/><path d="M-1-6V6" stroke="${bar}" stroke-width="2"/><path d="M2-3V3" stroke="${bar}" stroke-width="2"/></g>`;
  if (c === 'g') s += `<g ${at}><path d="M.5-6V0" stroke="#2d7c12"/><path d="M-5 0h11M-3 2h7M-1 4h3" stroke="#4e8145" stroke-width="1.300"/></g>`;
  if (c === 'r') s += power('#b86060', '#a93237');
  if ('otb'.includes(c)) s += `<circle ${at} r="8.600" fill="${c === 't' ? '#ab9469' : '#858585'}" stroke="${c === 't' ? '#655050' : '#454575'}" stroke-width=".8"/>`;
  if (c === 'b') s += power('#1719eb', '#1719eb');
  if ('hx'.includes(c)) s += `<path ${at} d="M0-8.800 8.500-4.500V4.500L0 8.800-8.500 4.500V-4.500z" fill="${c === 'h' ? '#99ccff' : '#ab9469'}" stroke="#805868" stroke-width=".6"/>`;
  if ('CSG'.includes(c)) s += `<text class="${c === 'S' ? 's' : 'c'}" x="${x + .5}" y="${y + 5}" text-anchor="middle" font-size="${c === 'S' ? 14.5 : 15.5}" font-weight="bold" fill="${c === 'G' ? '#ab9469' : '#ff6600'}">${c}</text>`;
  if (c === 'Q') s += `<path ${at} d="M-8-8.500h16.500V8.500H-8z" fill="#ff6600"/>`;
  if (c === 'w') s += `<path ${at} d="M-3-6.500h6v3h4v7H3v3h-6v-3h-3v-7h3z" fill="#fff"/>`;
}));
s += '<path d="M761.5 157.500h385v385.500h-385z" fill="none" stroke="#fff"/>';
banks.forEach(([color, , p, hot], i) => {
  s += `<clipPath id="b${i}"><path d="${path(p)}"/></clipPath>`;
  s += `<path d="${path(p)}" fill="none" stroke="${color}" stroke-width="${hot ? 6 : 5.5}" clip-path="url(#b${i})"/>`;
  if (hot) s += `<path d="${path(p)}" fill="none" stroke="#fff" stroke-width="3"/>`;
});
s += '<circle cx="873" cy="140" r="10.300" fill="#ddd"/><circle cx="569.500" cy="513" r="10.300" fill="#ddd"/>';
for (let k = 0; k < 19; k++) {
  s += `<text x="${X(k) + 10}" y="146" font-size="11" text-anchor="middle" fill="${k === 5 ? '#222' : '#fff'}">${k + 1}</text>`;
  s += `<text x="569" y="${Y(k) + 16}" font-size="11" text-anchor="middle" fill="${k === 17 ? '#222' : '#fff'}">${rows[k]}</text>`;
}
// Tops of the W-row letters that show above the tooltip
s += `<text class="c" x="913.5" y="538" text-anchor="middle" font-size="15.500" font-weight="bold" fill="#ff6600">C</text>`;
document.getElementById('map').innerHTML = s;
```
